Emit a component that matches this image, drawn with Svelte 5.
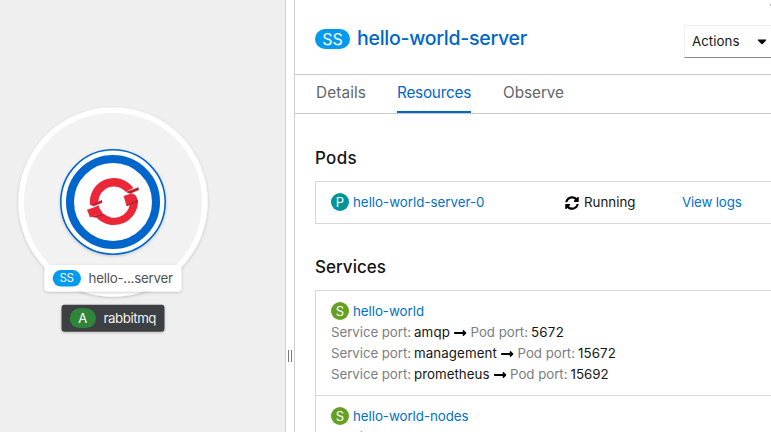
<script>
  const tabs = [
    { name: 'Details', width: 50 },
    { name: 'Resources', width: 74, active: true },
    { name: 'Observe', width: 61 },
  ];

  const services = [
    {
      name: 'hello-world',
      width: 71,
      ports: [
        { name: 'amqp', width: 36, pod: '5672', podWidth: 33 },
        { name: 'management', width: 83, pod: '15672', podWidth: 38 },
        { name: 'prometheus', width: 75.5, pod: '15692', podWidth: 38 },
      ],
    },
    {
      name: 'hello-world-nodes',
      width: 115.5,
      ports: [{ name: 'epmd', width: 37, pod: '4369', podWidth: 33 }],
    },
  ];

  // Tracks a label so that it fills the given advance width.
  function fit(node, width) {
    const natural = node.getBoundingClientRect().width;
    node.style.letterSpacing = `${(width - natural) / node.textContent.length}px`;
  }
</script>

{#snippet label(text, width, cls = '')}
  <span class="label {cls}" use:fit={width}>{text}</span>
{/snippet}

<div class="app">
  <section class="topology">
    <svg width="285" height="432" viewBox="0 0 285 432">
      <defs>
        <filter id="shadow" x="-20%" y="-20%" width="140%" height="150%">
          <feDropShadow dx="0" dy="1" stdDeviation="1.5" flood-color="#030303" flood-opacity="0.2" />
        </filter>
      </defs>
      <circle cx="113" cy="202" r="94.7" fill="#fff" filter="url(#shadow)" />
      <circle cx="113" cy="202" r="89.2" fill="#f2f2f2" />
      <circle cx="113" cy="202" r="52.2" fill="#fff" stroke="#0066cc" stroke-width="1.6" filter="url(#shadow)" />
      <circle cx="113" cy="202" r="43" fill="#fff" stroke="#0066cc" stroke-width="8" />
      <g transform="translate(80 170) scale(0.33333)">
        <path fill="#ec2738" d="M30 104A72 72 0 0 1 160 54L138 66A47 47 0 0 0 55 95L40 109Z" />
        <path fill="#ec2738" d="M50 143L73 133A47 47 0 0 0 149 104L174 93A72 72 0 0 1 50 143Z" />
        <path fill="#ec2738" d="M21 119L43 112L56 106L60 118L69 130L30 142ZM131 78L156 70L168 77L174 92L138 103Z" />
        <path fill="#b92030" d="M40 102L66 90L67 98L41 109ZM33 141L67 130L74 134L50 143ZM138 66L175 52L177 60L150 71ZM138 103L174 90L174 96L140 109Z" />
      </g>

      <rect x="44.5" y="265" width="137" height="26.5" rx="3" fill="#fff" filter="url(#shadow)" />
      <rect x="52.7" y="270" width="28.3" height="16.6" rx="8.3" fill="#009bf0" />
      <text x="59.5" y="282.4" font-size="11.5" fill="#fff" textLength="14.5">SS</text>
      <text x="88.5" y="283" font-size="13.3" fill="#4f5255" textLength="84.5">hello-...server</text>

      <rect x="61.5" y="304.7" width="103" height="27" rx="3" fill="#3c3f42" filter="url(#shadow)" />
      <rect x="69.7" y="308.3" width="26.3" height="19.8" rx="9.9" fill="#2f863b" />
      <text x="78.3" y="323" font-size="13" fill="#fff" textLength="9">A</text>
      <text x="103.5" y="323" font-size="13.3" fill="#f0f0f0" textLength="53">rabbitmq</text>
    </svg>
  </section>

  <div class="splitter"><i></i></div>

  <aside>
    <header>
      <span class="badge ss">SS</span>
      <h1>{@render label('hello-world-server', 170)}</h1>
      <button>
        {@render label('Actions', 47.5)}
        <svg class="caret" width="10" height="6" viewBox="0 0 10 6"><path d="M1 .5H9Q9.5 1 9 1.5L5.6 5Q5 5.5 4.4 5L1 1.5Q.5 1 1 .5Z" /></svg>
      </button>
      <svg class="close" width="1" height="2"><rect width="1" height="2" fill="#b8babc" /></svg>
    </header>

    <nav>
      {#each tabs as tab}
        <a class:active={tab.active}>{@render label(tab.name, tab.width)}</a>
      {/each}
    </nav>

    <main>
      <h2>{@render label('Pods', 42)}</h2>
      <div class="list">
        <div class="item pod">
          <div class="row name">
            <span class="badge p">P</span>
            {@render label('hello-world-server-0', 131.5, 'link')}
          </div>
          <div class="row status">
            <svg width="14" height="14" viewBox="0 0 512 512"><path d="M370.72 133.28C339.458 104.008 298.888 87.962 255.848 88c-77.458.068-144.328 53.178-162.791 126.85-1.344 5.363-6.122 9.15-11.651 9.15H24.103c-7.498 0-13.194-6.807-11.807-14.176C33.933 94.924 134.813 8 256 8c66.448 0 126.791 26.136 171.315 68.685L463.03 40.97C478.149 25.851 504 36.559 504 57.941V192c0 13.255-10.745 24-24 24H345.941c-21.382 0-32.09-25.851-16.971-40.971l41.75-41.749zM32 296h134.059c21.382 0 32.09 25.851 16.971 40.971l-41.75 41.75c31.262 29.273 71.835 45.319 114.876 45.28 77.418-.07 144.315-53.144 162.787-126.849 1.344-5.363 6.122-9.15 11.651-9.15h57.304c7.498 0 13.194 6.807 11.807 14.176C478.067 417.076 377.187 504 256 504c-66.448 0-126.791-26.136-171.315-68.685L48.97 471.03C33.851 486.149 8 475.441 8 454.059V320c0-13.255 10.745-24 24-24z" /></svg>
            {@render label('Running', 51.5)}
          </div>
          <div class="row">{@render label('View logs', 59.5, 'link')}</div>
        </div>
      </div>

      <h2 class="services">{@render label('Services', 71)}</h2>
      <div class="list">
        {#each services as service}
          <div class="item">
            <div class="row name">
              <span class="badge s">S</span>
              {@render label(service.name, service.width, 'link')}
            </div>
            {#each service.ports as port}
              <div class="row port">
                {@render label('Service port:', 80, 'muted')}
                {@render label(port.name, port.width)}
                <svg width="12.5" height="14" viewBox="0 0 448 512"><path d="M313.941 216H12c-6.627 0-12 5.373-12 12v56c0 6.627 5.373 12 12 12h301.941v46.059c0 21.382 25.851 32.09 40.971 16.971l86.059-86.059c9.373-9.373 9.373-24.569 0-33.941l-86.059-86.059c-15.119-15.119-40.971-4.411-40.971 16.971V216z" /></svg>
                {@render label('Pod port:', 57.5, 'muted')}
                {@render label(port.pod, port.podWidth)}
              </div>
            {/each}
          </div>
        {/each}
      </div>
    </main>
  </aside>
</div>

<style>
  .app {
    display: flex;
    width: 771px;
    height: 432px;
    overflow: hidden;
    background: #fff;
    color: #151515;
    font-family: Inter, 'Open Sans', sans-serif;
    font-size: 13.3px;
    line-height: 21px;
  }
  .topology {
    flex: 0 0 285px;
    background: #efefef;
  }
  .topology svg {
    display: block;
  }
  .splitter {
    box-sizing: border-box;
    flex: 0 0 10px;
    display: flex;
    justify-content: center;
    border: solid #d0d0d0;
    border-width: 0 1px;
  }
  .splitter i {
    box-sizing: border-box;
    width: 4px;
    height: 12px;
    margin: 350px 0 0;
    border: solid #77797b;
    border-width: 0 1px;
  }
  aside {
    flex: 1;
    min-width: 0;
    overflow: hidden;
  }
  .label {
    display: inline-block;
    white-space: nowrap;
    flex: none;
  }
  .badge {
    display: inline-flex;
    flex: none;
    align-items: center;
    justify-content: center;
    box-sizing: border-box;
    width: 18px;
    height: 18px;
    margin-bottom: 1px;
    border-radius: 10px;
    color: #fff;
    font-size: 13px;
    line-height: 18px;
  }
  .badge.ss {
    width: 35px;
    height: 20px;
    margin: 3px 7px 0 0;
    background: #009bf0;
    font-size: 16px;
  }
  .badge.p {
    background: #009596;
  }
  .badge.s {
    background: #66a023;
  }
  header {
    position: relative;
    box-sizing: border-box;
    display: flex;
    align-items: center;
    height: 75px;
    padding: 0 0 0 20px;
    border-bottom: 1px solid #c9c9c9;
  }
  h1 {
    flex: 1;
    margin: 2px 0 0;
    color: #0066cc;
    font-size: 19.5px;
    font-weight: 500;
    line-height: 26px;
  }
  button {
    box-sizing: border-box;
    display: flex;
    align-items: center;
    justify-content: space-between;
    width: 95px;
    height: 33px;
    margin: 9px -8px 0 0;
    padding: 0 11px 0 7px;
    border: 1px solid #f0f0f0;
    border-bottom-color: #8a8d90;
    background: #fff;
    color: #151515;
    font: inherit;
  }
  .close {
    position: absolute;
    top: 4px;
    right: 0;
  }
  nav {
    box-sizing: border-box;
    display: flex;
    gap: 32px;
    height: 39px;
    padding-left: 21px;
    border-bottom: 1px solid #c9c9c9;
    font-size: 15.3px;
  }
  nav a {
    box-sizing: border-box;
    height: 38px;
    padding-top: 7px;
    color: #626568;
  }
  nav a.active {
    border-bottom: 2px solid #0066cc;
    color: #0066cc;
  }
  nav a:first-child {
    margin-right: -1px;
  }
  main {
    padding-left: 20px;
  }
  h2 {
    margin: 33px 0 12px;
    font-size: 17px;
    font-weight: 500;
    line-height: 22px;
  }
  h2.services {
    margin-top: 32px;
  }
  .list {
    border: 1px solid #d8d8d8;
    border-right: 0;
  }
  .item {
    padding: 10px 15px;
  }
  .item + .item {
    border-top: 1px solid #d8d8d8;
  }
  .row {
    display: flex;
    align-items: center;
    height: 21px;
  }
  .name {
    gap: 4px;
  }
  .pod {
    display: flex;
  }
  .pod .name {
    width: 234px;
  }
  .status {
    gap: 5px;
    width: 117px;
  }
  .port {
    gap: 4px;
  }
  .port .label:first-child {
    margin-right: -1px;
  }
  .port .label:last-child {
    margin-left: -1px;
  }
  .link {
    color: #0071cc;
  }
  .muted {
    color: #7b7e81;
  }
</style>
